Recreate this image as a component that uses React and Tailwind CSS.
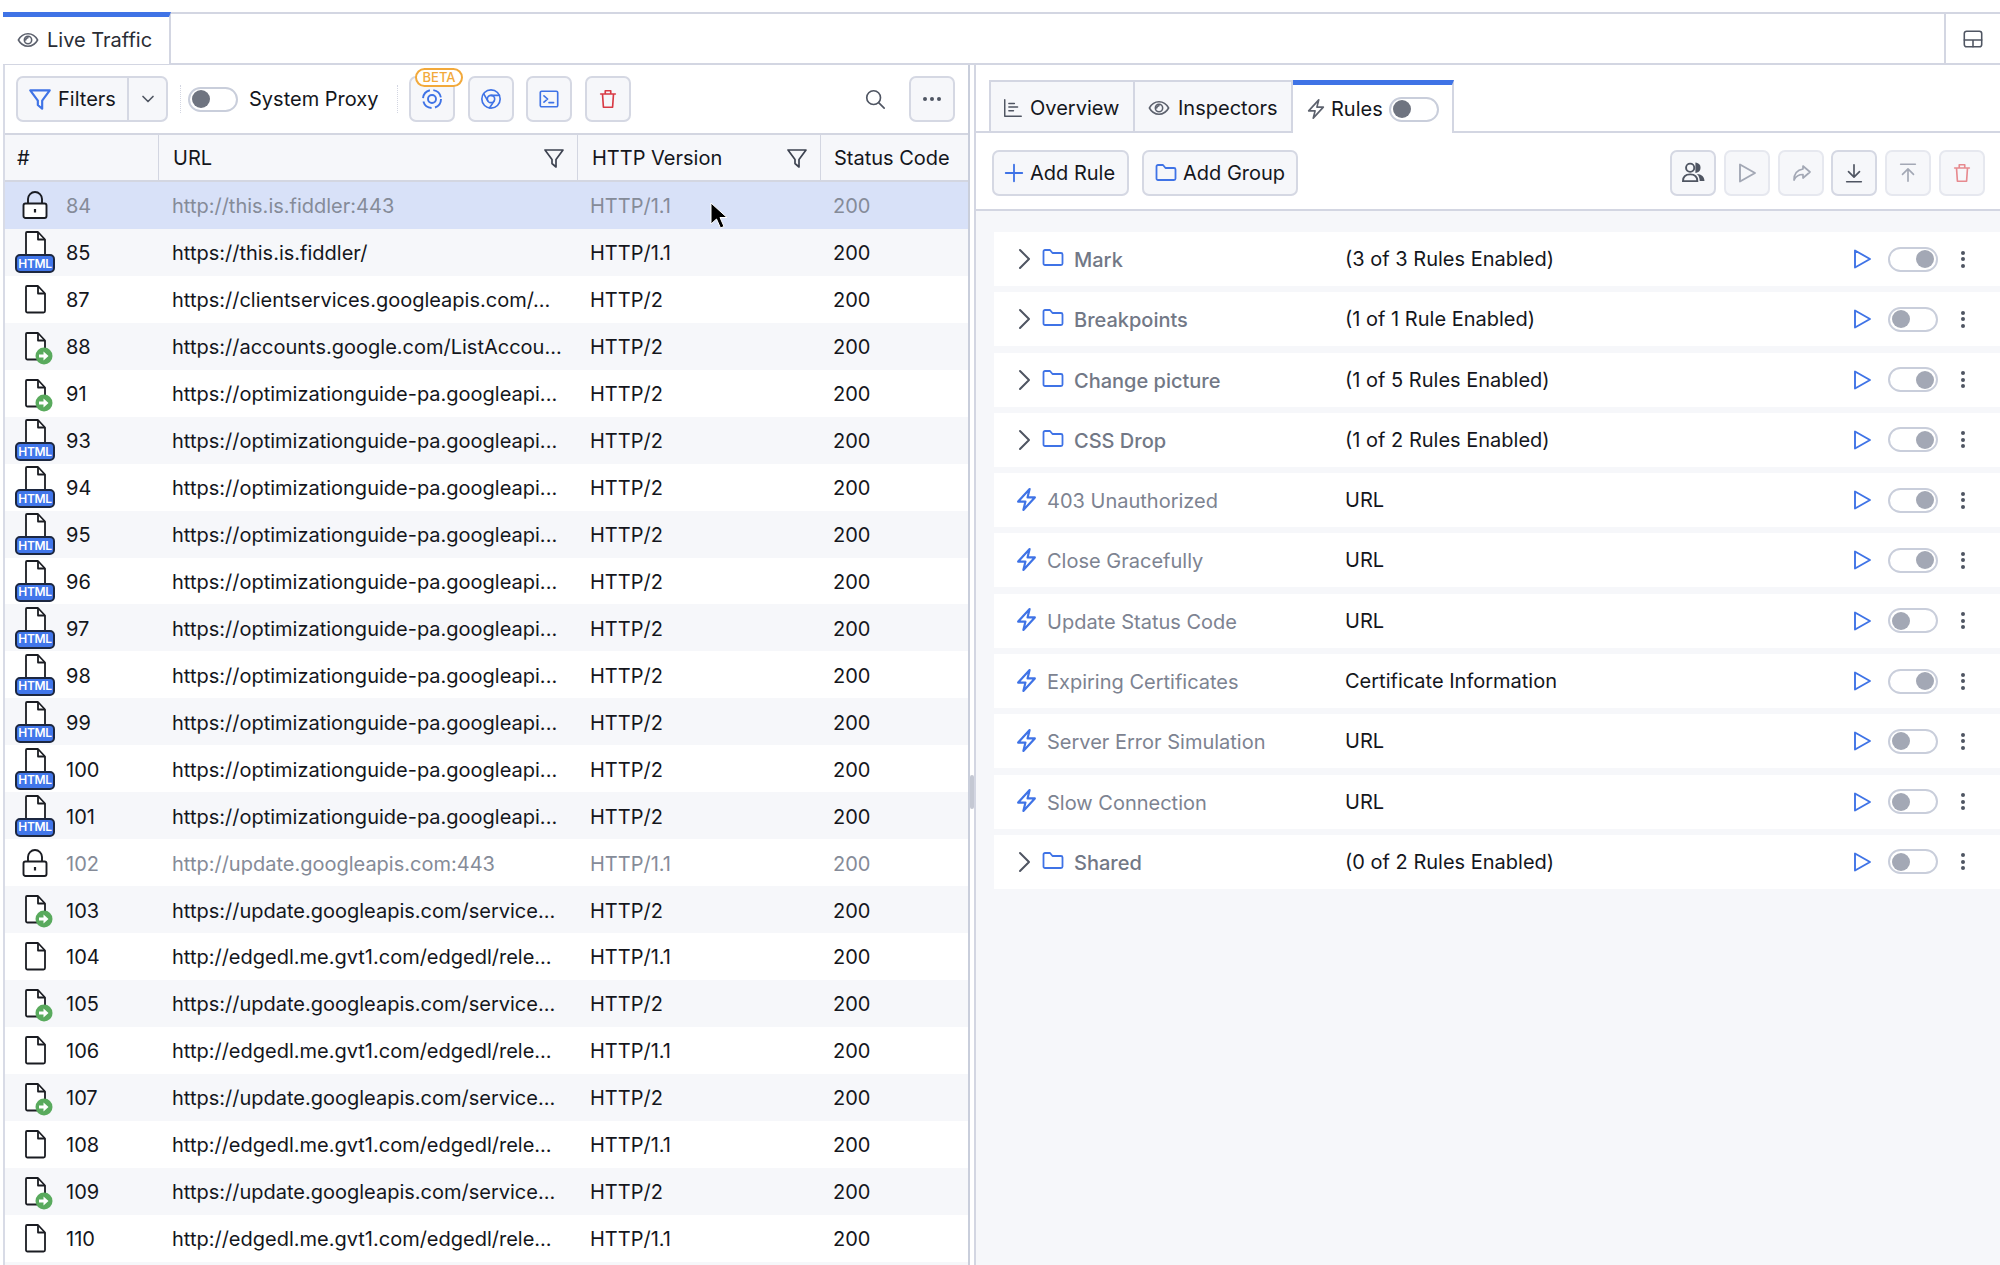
import React from "react";

const S = ({ size = 24, className = "", children, sw = 2, vb = "0 0 24 24", fill = "none" }) => (
  <svg width={size} height={size} viewBox={vb} fill={fill} stroke="currentColor" strokeWidth={sw} strokeLinecap="round" strokeLinejoin="round" className={"shrink-0 " + className}>{children}</svg>
);
const Funnel = (p) => <S {...p}><path d="M3 4h18l-7 9.500V21l-4-3.500v-4z" /></S>;
const Eye = (p) => <S {...p} sw={1.7}><path d="M1.500 12C4 7.500 7.700 5.200 12 5.200S20 7.500 22.500 12C20 16.500 16.300 18.800 12 18.800S4 16.500 1.500 12z" /><circle cx="12" cy="12" r="4" /><path d="M12 9.500a2.500 2.500 0 0 0-2.500 2.500" /></S>;
const Bolt = ({ sw = 2.100, ...p }) => <S {...p} sw={sw}><path d="M15 2 4 14h7l-2 8 11-12h-7z" /></S>;
const Folder = (p) => <S {...p} sw={1.8}><path d="M2.500 5.500a1.500 1.500 0 0 1 1.500-1.500h5l2.500 3h8.500a1.500 1.500 0 0 1 1.500 1.500v9a1.500 1.500 0 0 1-1.500 1.500h-16a1.500 1.500 0 0 1-1.500-1.500z" /></S>;
const Trash = (p) => <S {...p} sw={1.8}><path d="M4 6.500h16M6 6.500l1 14.500h10l1-14.500M9 6.500V3h6v3.500" /></S>;
const Play = (p) => <S {...p} sw={1.9}><path d="M5 3.500v17L20 12z" /></S>;

const Doc = () => (
  <svg width="23" height="29" viewBox="0 0 23 29" fill="none" stroke="#1a1c22" strokeWidth="1.8" strokeLinejoin="round" className="block">
    <path d="M3 1h11l7 7.500V26a1.500 1.500 0 0 1-1.500 1.500h-16A1.500 1.500 0 0 1 2 26V2a1 1 0 0 1 1-1z" fill="#fff" />
    <path d="M14 1v7.500h7" />
  </svg>
);

const RowIcon = ({ t }) => {
  if (t === "lock")
    return (
      <svg width="26" height="30" viewBox="0 0 26 30" fill="none" stroke="#1a1c22" strokeWidth="1.9" className="block">
        <path d="M6 14V9a7 7 0 0 1 14 0v5" />
        <rect x="1.500" y="13.500" width="23" height="14.500" rx="2" fill="#fff" />
        <path d="M13 19v3.500" strokeWidth="2.200" />
      </svg>
    );
  if (t === "doc")
    return <div className="ml-[9px]"><Doc /></div>;
  if (t === "go")
    return (
      <div className="relative ml-[9px]">
        <Doc />
        <svg width="18" height="18" viewBox="0 0 18 18" className="absolute left-[11px] top-[15px]">
          <circle cx="9" cy="9" r="8.500" fill="#59aa5d" />
          <path d="M4 7.500h4.500V4.500L13.500 9l-5 4.500v-3H4z" fill="#fff" />
        </svg>
      </div>
    );
  return (
    <div className="relative h-[42px] w-[41px]">
      <div className="ml-[9px] h-[26px] overflow-hidden"><Doc /></div>
      <div className="absolute left-0 top-[23px] flex h-[19px] w-[40px] items-center justify-center rounded-[5px] border-2 border-[#1c2740] bg-[#4176ea] text-[12px] font-semibold leading-none tracking-tight text-white">HTML</div>
    </div>
  );
};

const icons = {
  84: "lock", 85: "html", 87: "doc", 88: "go", 91: "go", 93: "html", 94: "html", 95: "html", 96: "html", 97: "html", 98: "html", 99: "html", 100: "html", 101: "html",
  102: "lock", 103: "go", 104: "doc", 105: "go", 106: "doc", 107: "go", 108: "doc", 109: "go", 110: "doc",
};
const opt = "https://optimizationguide-pa.googleapi...";
const upd = "https://update.googleapis.com/service...";
const edg = "http://edgedl.me.gvt1.com/edgedl/rele...";
const rows = [
  [84, "http://this.is.fiddler:443", "HTTP/1.1"],
  [85, "https://this.is.fiddler/", "HTTP/1.1"],
  [87, "https://clientservices.googleapis.com/...", "HTTP/2"],
  [88, "https://accounts.google.com/ListAccou...", "HTTP/2"],
  [91, opt, "HTTP/2"], [93, opt, "HTTP/2"], [94, opt, "HTTP/2"], [95, opt, "HTTP/2"], [96, opt, "HTTP/2"], [97, opt, "HTTP/2"], [98, opt, "HTTP/2"], [99, opt, "HTTP/2"], [100, opt, "HTTP/2"], [101, opt, "HTTP/2"],
  [102, "http://update.googleapis.com:443", "HTTP/1.1"],
  [103, upd, "HTTP/2"], [104, edg, "HTTP/1.1"], [105, upd, "HTTP/2"], [106, edg, "HTTP/1.1"], [107, upd, "HTTP/2"], [108, edg, "HTTP/1.1"], [109, upd, "HTTP/2"], [110, edg, "HTTP/1.1"],
];

const rules = [
  ["g", "Mark", "(3 of 3 Rules Enabled)", 1],
  ["g", "Breakpoints", "(1 of 1 Rule Enabled)", 0],
  ["g", "Change picture", "(1 of 5 Rules Enabled)", 1],
  ["g", "CSS Drop", "(1 of 2 Rules Enabled)", 1],
  ["r", "403 Unauthorized", "URL", 1],
  ["r", "Close Gracefully", "URL", 1],
  ["r", "Update Status Code", "URL", 0],
  ["r", "Expiring Certificates", "Certificate Information", 1],
  ["r", "Server Error Simulation", "URL", 0],
  ["r", "Slow Connection", "URL", 0],
  ["g", "Shared", "(0 of 2 Rules Enabled)", 0],
];

const Toggle = ({ on, dark }) => (
  <div className={"flex h-[25px] w-[50px] shrink-0 items-center rounded-full border-2 border-[#c9cedb] bg-white px-[2px] " + (on ? "justify-end" : "justify-start")}>
    <div className={"h-[18px] w-[18px] rounded-full " + (dark ? "bg-[#6f7480]" : "bg-[#a3a8b5]")} />
  </div>
);

const IconBtn = ({ className = "", children, dim }) => (
  <div className={"flex h-[46px] w-[46px] shrink-0 items-center justify-center rounded-[7px] border-2 bg-[#f6f7fa] " + (dim ? "border-[#e6e8ef] " : "border-[#d5d8e3] ") + className}>{children}</div>
);

const Head = ({ w, label, filter, pl }) => (
  <div className={"flex h-full items-center justify-between border-r border-[#d3d6e1] pr-[11px] " + w + " " + pl}>
    <span>{label}</span>
    {filter && <Funnel size={24} sw={1.7} className="text-[#3d4350]" />}
  </div>
);

export default function App() {
  return (
    <div className="relative h-[1265px] w-[2000px] overflow-hidden bg-white pt-[12px] text-[20px] text-[#14161c] [font-family:Inter,'Liberation_Sans',sans-serif]">
      <div className="ml-[3px] flex h-[53px] border-y-2 border-[#d3d6e2]">
        <div className="-mt-[2px] flex h-[52px] w-[168px] items-center gap-[8px] border-t-[5px] border-r-2 border-t-[#3f73e6] border-r-[#d3d6e2] bg-white pl-[14px] pb-[1px]">
          <Eye size={22} className="text-[#5c616d]" />
          <span className="text-[#2a2d35]">Live Traffic</span>
        </div>
        <div className="flex-1" />
        <div className="flex h-full w-[56px] items-center justify-center border-l-2 border-[#d3d6e2]">
          <S size={22} sw={1.7} className="text-[#4f5562]"><rect x="2.500" y="3.500" width="19" height="17" rx="2.500" /><path d="M2.500 13h19M12 13v7.500" /></S>
        </div>
      </div>

      <div className="flex h-[1200px]">
        {/* left */}
        <div className="ml-[3px] flex h-full w-[965px] shrink-0 flex-col border-l-2 border-[#d8dbe6]">
          <div className="flex h-[68px] shrink-0 items-center pl-[11px]">
            <div className="flex h-[46px] w-[152px] rounded-[7px] border-2 border-[#d5d8e3] bg-[#f6f7fa]">
              <div className="flex w-[111px] items-center gap-[5px] border-r-2 border-[#d5d8e3] pl-[9px]">
                <Funnel size={26} className="text-[#3f73e6]" />
                <span>Filters</span>
              </div>
              <div className="flex flex-1 items-center justify-center">
                <S size={20} className="text-[#4f5562]"><path d="m6 9 6 6 6-6" /></S>
              </div>
            </div>
            <div className="ml-[12px] h-[28px] border-l border-dotted border-[#d3d6e2]" />
            <div className="ml-[7px]"><Toggle dark /></div>
            <span className="ml-[11px] w-[130px] whitespace-nowrap">System Proxy</span>
            <div className="ml-[18px] h-[28px] border-l border-dotted border-[#d3d6e2]" />
            <div className="relative ml-[11px]">
              <IconBtn>
                <svg width="22" height="22" viewBox="0 0 22 22" fill="none" stroke="#3f73e6" strokeWidth="1.900">
                  <circle cx="11" cy="11" r="4" />
                  <circle cx="11" cy="11" r="9" strokeDasharray="11 3.500" />
                </svg>
              </IconBtn>
              <div className="absolute -top-[8px] left-[6px] flex h-[19px] w-[48px] items-center justify-center rounded-full border-2 border-[#f2a93b] bg-white text-[13px] font-medium leading-none text-[#f2a93b]">BETA</div>
            </div>
            <div className="ml-[13px]">
              <IconBtn>
                <S size={22} sw={1.8} className="text-[#3f73e6]"><circle cx="12" cy="12" r="10" /><circle cx="12" cy="12" r="4" /><path d="M21.200 8H12M3.900 6.100 8.500 14M10.300 21.800 15.500 14" /></S>
              </IconBtn>
            </div>
            <div className="ml-[12px]">
              <IconBtn>
                <S size={22} sw={1.8} className="text-[#3f73e6]"><rect x="2.500" y="3.500" width="19" height="17" rx="1.500" /><path d="m6.500 8.500 4 3.500-4 3.500M12 16h5" /></S>
              </IconBtn>
            </div>
            <div className="ml-[13px]">
              <IconBtn><Trash size={22} className="text-[#d83a44]" /></IconBtn>
            </div>
            <div className="ml-[233px] mr-[23px]">
              <S size={22} sw={1.8} className="text-[#4f5562]"><circle cx="10.500" cy="10.500" r="7.500" /><path d="m16 16 6 6" /></S>
            </div>
            <IconBtn>
              <div className="flex gap-[3px]">
                <div className="h-[4px] w-[4px] rounded-full bg-[#4f5562]" />
                <div className="h-[4px] w-[4px] rounded-full bg-[#4f5562]" />
                <div className="h-[4px] w-[4px] rounded-full bg-[#4f5562]" />
              </div>
            </IconBtn>
          </div>

          <div className="flex h-[49px] shrink-0 items-center border-y-2 border-[#d3d6e1] bg-[#f6f7fa]">
            <Head w="w-[154px]" pl="pl-[12px]" label="#" />
            <Head w="w-[419px]" pl="pl-[14px]" label="URL" filter />
            <Head w="w-[243px]" pl="pl-[14px]" label="HTTP Version" filter />
            <div className="flex-1 whitespace-nowrap pl-[13px]">Status Code</div>
          </div>

          <div>
            {rows.map(([n, url, ver], i) => {
              const muted = icons[n] === "lock";
              const bg = i === 0 ? "bg-[#d8e1f8]" : i % 2 ? "bg-[#f6f7fa]" : "bg-white";
              return (
                <div key={n} className={"flex h-[46.950px] items-center whitespace-nowrap pt-[2px] " + bg + (muted ? " text-[#858b98]" : "")}>
                  <div className={"-mt-[2px] w-[61px] shrink-0 " + (muted ? "pl-[17px]" : "pl-[10px]")}><RowIcon t={icons[n]} /></div>
                  <div className="w-[106px] shrink-0">{n}</div>
                  <div className="w-[418px] shrink-0">{url}</div>
                  <div className="w-[243px] shrink-0">{ver}</div>
                  <div>200</div>
                </div>
              );
            })}
            <div className="h-[4px] bg-[#f6f7fa]" />
          </div>
        </div>

        {/* splitter */}
        <div className="flex w-[8px] shrink-0 justify-center border-x-2 border-l-[#c9cedb] border-r-[#d3d6e2] bg-white pt-[710px]">
          <div className="h-[34px] w-[4px] rounded-sm bg-[#c4c8d3]" />
        </div>

        {/* right */}
        <div className="flex h-full flex-1 flex-col">
          <div className="mt-[15px] flex h-[53px] shrink-0 border-b-2 border-[#d3d6e2] pl-[13px]">
            <div className="flex h-full w-[146px] items-center gap-[6px] border-2 border-b-0 border-[#d3d6e2] bg-[#f6f7fa] pl-[11px] pt-[2px]">
              <S size={22} sw={1.6} className="text-[#4f5562]"><path d="M3 3v18h18M7.500 7h6M7.500 11h9.500M7.500 15h5" /></S>
              <span>Overview</span>
            </div>
            <div className="flex h-full w-[158px] items-center gap-[8px] border-t-2 border-r-2 border-[#d3d6e2] bg-[#f6f7fa] pl-[13px] pt-[2px]">
              <Eye size={22} className="text-[#5c616d]" />
              <span>Inspectors</span>
            </div>
            <div className="-mb-[2px] flex h-[53px] w-[161px] items-center gap-[4px] self-start border-t-[5px] border-r-2 border-t-[#3f73e6] border-r-[#d3d6e2] bg-white pl-[12px]">
              <Bolt size={22} sw={1.8} className="text-[#5c616d]" />
              <span className="w-[54px]">Rules</span>
              <Toggle dark />
            </div>
          </div>

          <div className="flex h-[78px] shrink-0 items-center border-b-2 border-[#d3d6e2] pl-[16px] pr-[15px] pt-[3px]">
            <div className="flex h-[46px] w-[137px] items-center gap-[5px] rounded-[7px] border-2 border-[#d5d8e3] bg-[#f6f7fa] pl-[9px]">
              <S size={22} className="text-[#3f73e6]"><path d="M12 3v18M3 12h18" /></S>
              <span>Add Rule</span>
            </div>
            <div className="ml-[13px] flex h-[46px] w-[156px] items-center gap-[5px] rounded-[7px] border-2 border-[#d5d8e3] bg-[#f6f7fa] pl-[10px]">
              <Folder size={24} className="text-[#3f73e6]" />
              <span>Add Group</span>
            </div>
            <div className="flex-1" />
            <div className="flex gap-[7.800px]">
              <IconBtn>
                <svg width="25" height="21" viewBox="0 0 26 22" fill="none" stroke="#4f5562" strokeWidth="2">
                  <circle cx="9.500" cy="6" r="4.300" />
                  <path d="M2 20c0-4.500 3-7 7.500-7s7.500 2.500 7.500 7z" />
                  <path d="M16 1.800a4.300 4.300 0 0 1 0 8.400z" fill="#4f5562" />
                  <path d="M16.500 12.500c5 0 8 3 8 7.500H19.500c0-3-1-6-3-7.500z" fill="#4f5562" stroke="none" />
                </svg>
              </IconBtn>
              <IconBtn dim><Play size={24} sw={1.7} className="text-[#a3a8b5]" /></IconBtn>
              <IconBtn dim>
                <S size={24} sw={1.7} className="text-[#a3a8b5]"><path d="M14 5l7 6-7 6v-3.500c-4 0-7 1.500-9 5.500 0-6 3-10 9-11z" /></S>
              </IconBtn>
              <IconBtn>
                <S size={22} sw={1.8} className="text-[#4f5562]"><path d="M12 3v13M6 10.500l6 6 6-6M4 21.500h16" /></S>
              </IconBtn>
              <IconBtn dim>
                <S size={22} sw={1.8} className="text-[#a3a8b5]"><path d="M12 21V8M6 13.500l6-6 6 6M4 2.500h16" /></S>
              </IconBtn>
              <IconBtn dim><Trash size={22} className="text-[#e78a8f]" /></IconBtn>
            </div>
          </div>

          <div className="flex flex-1 flex-col gap-[6.300px] bg-[#f6f7fa] pl-[18px] pt-[21px]">
            {rules.map(([k, name, val, on]) => (
              <div key={name} className="flex h-[54px] shrink-0 items-center whitespace-nowrap bg-white">
                {k === "g" ? (
                  <div className="flex w-[351px] items-center pl-[18px]">
                    <S size={24} className="text-[#4f5562]"><path d="m8 3 9 9-9 9" /></S>
                    <Folder size={24} className="ml-[5px] -mt-[2px] text-[#3f73e6]" />
                    <span className="ml-[9px] mt-[2px] font-medium text-[#727886]">{name}</span>
                  </div>
                ) : (
                  <div className="flex w-[351px] items-center pl-[20px]">
                    <Bolt size={25} className="-mt-[2px] text-[#3f73e6]" />
                    <span className="ml-[8px] mt-[2px] text-[#7d8391]">{name}</span>
                  </div>
                )}
                <span className="flex-1">{val}</span>
                <Play size={24} className="text-[#3f73e6]" />
                <div className="ml-[14px]"><Toggle on={on} /></div>
                <div className="ml-[23px] mr-[35px] flex w-[4px] flex-col gap-[2.500px]">
                  <div className="h-[4px] w-[4px] rounded-full bg-[#4f5562]" />
                  <div className="h-[4px] w-[4px] rounded-full bg-[#4f5562]" />
                  <div className="h-[4px] w-[4px] rounded-full bg-[#4f5562]" />
                </div>
              </div>
            ))}
          </div>
        </div>
      </div>

      <svg width="18" height="28" viewBox="0 0 18 28" className="absolute left-[710px] top-[202px]">
        <path d="M1 1v21l5.500-5 4 9 3.500-1.500-4-9H17z" fill="#000" stroke="#fff" strokeWidth="1" />
      </svg>
    </div>
  );
}
